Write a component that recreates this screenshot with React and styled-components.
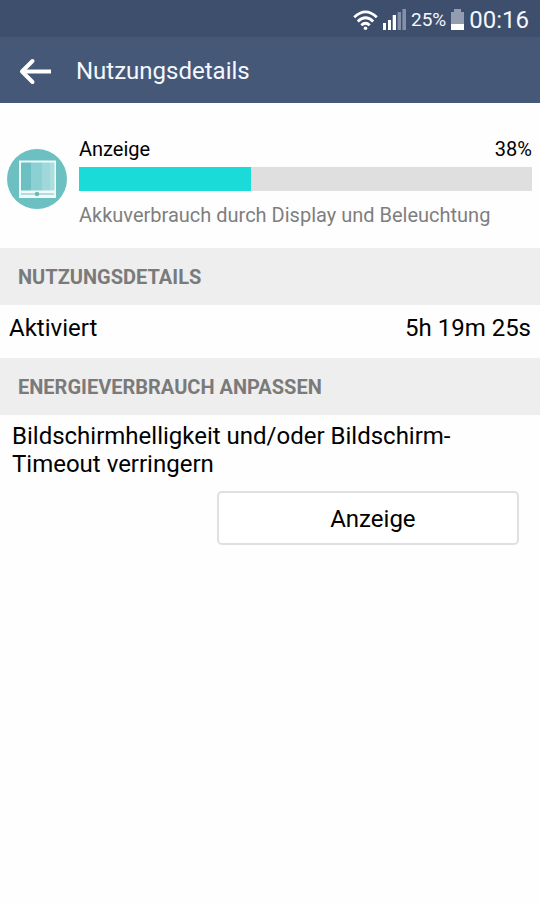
import styled, { createGlobalStyle } from 'styled-components';

const usage = {
    name: 'Anzeige',
    percent: 38,
    description: 'Akkuverbrauch durch Display und Beleuchtung',
};

const details = [
    { label: 'Aktiviert', value: '5h 19m 25s' },
];

export default function App() {
    return (
        <>
            <GlobalStyle />
            <StatusBar>
                <WifiIcon />
                <SignalIcon />
                <BatteryLevel>25%</BatteryLevel>
                <BatteryIcon />
                <Clock>00:16</Clock>
            </StatusBar>
            <AppBar>
                <BackButton type="button" aria-label="Zurück">
                    <BackIcon />
                </BackButton>
                <Title>Nutzungsdetails</Title>
            </AppBar>
            <main>
                <Usage>
                    <DisplayIcon />
                    <UsageBody>
                        <UsageHead>
                            <span>{usage.name}</span>
                            <span>{usage.percent}%</span>
                        </UsageHead>
                        <Track>
                            <Fill style={{ width: usage.percent + '%' }} />
                        </Track>
                        <Description>{usage.description}</Description>
                    </UsageBody>
                </Usage>
                <Section>NUTZUNGSDETAILS</Section>
                <Details>
                    {details.map(item => (
                        <Row key={item.label}>
                            <dt>{item.label}</dt>
                            <dd>{item.value}</dd>
                        </Row>
                    ))}
                </Details>
                <Section>ENERGIEVERBRAUCH ANPASSEN</Section>
                <Advice>
                    <p>Bildschirmhelligkeit und/oder Bildschirm-Timeout verringern</p>
                    <ActionButton type="button">Anzeige</ActionButton>
                </Advice>
            </main>
        </>
    );
}

function WifiIcon() {
    return (
        <svg width="25" height="22" viewBox="0 0 25 22" fill="none" stroke="#fff" strokeWidth="2.8" aria-hidden="true">
            <path d="M1.2 8.2Q12.5 -2.4 23.8 8.2" />
            <path d="M4.8 12.4Q12.5 5 20.2 12.4" />
            <path d="M8.3 16.2Q12.5 12.2 16.7 16.2" />
            <circle cx="12.5" cy="19.2" r="1.8" fill="#fff" stroke="none" />
        </svg>
    );
}

function SignalIcon() {
    return (
        <svg width="23" height="22" viewBox="0 0 23 22" fill="#fff" aria-hidden="true">
            <rect x="0" y="14" width="3" height="7" />
            <rect x="5" y="11" width="3" height="10" />
            <rect x="9.7" y="6" width="3.3" height="15" />
            <rect x="14.6" y="3" width="3.4" height="18" fill="#8490a9" />
            <rect x="19.4" y="0" width="3.6" height="21" fill="#8490a9" />
        </svg>
    );
}

function BatteryIcon() {
    return (
        <svg width="13" height="22" viewBox="0 0 13 22" aria-hidden="true">
            <path d="M3 0h7v3h3v12H0V3h3z" fill="#939db2" />
            <rect x="0" y="15" width="13" height="6" fill="#fff" />
        </svg>
    );
}

function BackIcon() {
    return (
        <svg width="34" height="28" viewBox="0 0 34 28" fill="none" stroke="#fff" strokeWidth="4" strokeLinecap="round" strokeLinejoin="round" aria-hidden="true">
            <path d="M14.5 4L4 14.5L14.5 25" />
            <path d="M5 14.5H33" strokeLinecap="butt" />
        </svg>
    );
}

function DisplayIcon() {
    return (
        <UsageIcon viewBox="0 0 60 60" aria-hidden="true">
            <circle cx="30" cy="30" r="30" fill="#6cc0c2" />
            <rect x="12" y="11.5" width="37" height="37.5" fill="#f1fafa" />
            <rect x="14" y="13.5" width="10" height="28" fill="#6cc0c2" />
            <rect x="24" y="13.5" width="11" height="28" fill="#8bd0d2" />
            <rect x="35" y="13.5" width="8" height="28" fill="#9ed8da" />
            <rect x="43" y="13.5" width="4.5" height="28" fill="#addedf" />
            <rect x="14" y="44.4" width="33" height="1.2" fill="#8cc8ca" />
            <circle cx="30" cy="45" r="2.2" fill="#6cb9bb" />
        </UsageIcon>
    );
}

const GlobalStyle = createGlobalStyle`
    * {
        box-sizing: border-box;
    }

    body {
        margin: 0;
        background: #fefefe;
        color: #000;
        font-family: Roboto, 'Liberation Sans', sans-serif;
        font-size: 24px;
        line-height: 28px;
    }

    p, h1, h2, dl, dd {
        margin: 0;
    }
`;

const StatusBar = styled.div`
    display: flex;
    align-items: center;
    justify-content: flex-end;
    gap: 5px;
    height: 37px;
    padding: 2px 11px 0;
    background: #3e4e6d;
    color: #f4f8ff;
`;

const BatteryLevel = styled.span`
    font-size: 19px;
`;

const Clock = styled.span`
    font-size: 24px;
`;

const AppBar = styled.header`
    display: flex;
    align-items: center;
    gap: 24px;
    height: 66px;
    padding: 2px 18px 0;
    background: #465878;
    color: #f4f8ff;
`;

const BackButton = styled.button`
    display: flex;
    padding: 0;
    border: none;
    background: none;
`;

const Title = styled.h1`
    font-size: 24px;
    font-weight: 400;
`;

const Usage = styled.section`
    display: flex;
    align-items: center;
    gap: 12px;
    padding: 32px 8px 19px 7px;
`;

const UsageIcon = styled.svg`
    flex: none;
    width: 60px;
    height: 60px;
    margin-bottom: 6px;
`;

const UsageBody = styled.div`
    flex: 1;
`;

const UsageHead = styled.div`
    display: flex;
    justify-content: space-between;
    margin-bottom: 4px;
    font-size: 20px;
`;

const Track = styled.div`
    height: 24px;
    background: #dfdfdf;
`;

const Fill = styled.div`
    height: 100%;
    background: #1bdbd8;
`;

const Description = styled.p`
    margin-top: 10px;
    color: #7e7e7e;
    font-size: 20px;
`;

const Section = styled.h2`
    padding: 15px 18px 14px;
    background: #eee;
    color: #7a7a7a;
    font-size: 20px;
    font-weight: 700;
`;

const Details = styled.dl`
    padding: 9px 9px 16px;
`;

const Row = styled.div`
    display: flex;
    justify-content: space-between;
`;

const Advice = styled.section`
    display: flex;
    flex-direction: column;
    padding: 7px 21px 16px 12px;
`;

const ActionButton = styled.button`
    align-self: flex-end;
    width: calc(60% - 2px);
    height: 54px;
    margin-top: 13px;
    padding: 2px 0 0 10px;
    border: 2px solid #e0e0e0;
    border-radius: 5px;
    background: #fff;
    color: #000;
    font: inherit;
`;
